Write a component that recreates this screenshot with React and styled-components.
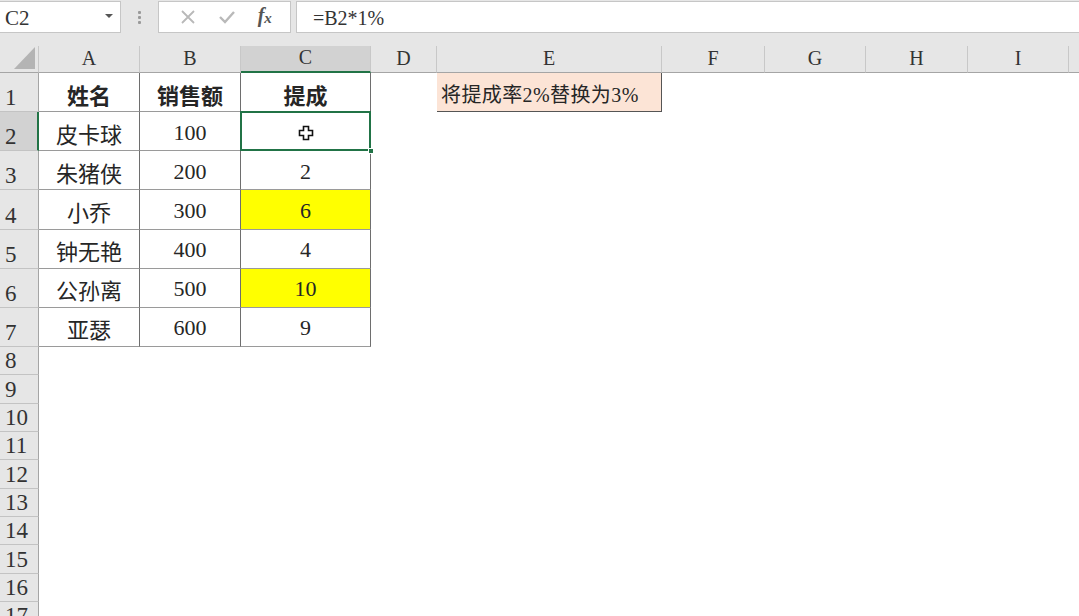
import React from "react";
import styled, { createGlobalStyle } from "styled-components";

const GlobalStyle = createGlobalStyle`
    html, body {
        margin: 0;
        padding: 0;
        background: #ffffff;
    }
    * {
        box-sizing: border-box;
    }
`;

const SERIF = `"Liberation Serif", "Noto Sans CJK SC", serif`;

const columns = ["A", "B", "C", "D", "E", "F", "G", "H", "I", ""];

const tableRows = [
    { name: "姓名", sales: "销售额", bonus: "提成", head: true },
    { name: "皮卡球", sales: "100", bonus: "", active: true },
    { name: "朱猪侠", sales: "200", bonus: "2" },
    { name: "小乔", sales: "300", bonus: "6", mark: true },
    { name: "钟无艳", sales: "400", bonus: "4" },
    { name: "公孙离", sales: "500", bonus: "10", mark: true },
    { name: "亚瑟", sales: "600", bonus: "9" },
];

const emptyRows = [8, 9, 10, 11, 12, 13, 14, 15, 16, 17];

const App = () => {
    return (
        <>
            <GlobalStyle />
            <Window>
                <FormulaBar>
                    <NameBox>
                        <span>C2</span>
                        <DropArrow />
                    </NameBox>
                    <Grip>
                        <i />
                        <i />
                        <i />
                    </Grip>
                    <ActionBox>
                        <svg width="18" height="18" viewBox="0 0 18 18">
                            <path d="M3 3 L15 15 M15 3 L3 15" stroke="#b9b9b9" strokeWidth="1.8" fill="none" />
                        </svg>
                        <svg width="20" height="18" viewBox="0 0 20 18">
                            <path d="M3 9 L8 14 L17 4" stroke="#b9b9b9" strokeWidth="2.4" fill="none" />
                        </svg>
                        <FxLabel>
                            f<sub>x</sub>
                        </FxLabel>
                    </ActionBox>
                    <FormulaInput>=B2*1%</FormulaInput>
                </FormulaBar>

                <Sheet>
                    <Corner>
                        <svg width="21" height="22" viewBox="0 0 21 22">
                            <polygon points="21,0 21,22 0,22" fill="#b4b4b4" />
                        </svg>
                    </Corner>
                    {columns.map((c, i) => (
                        <ColHeader key={"h" + i} $selected={c === "C"} $last={c === ""}>
                            {c}
                        </ColHeader>
                    ))}

                    {tableRows.map((r, i) => (
                        <React.Fragment key={"r" + i}>
                            <RowHeader $selected={r.active}>{i + 1}</RowHeader>
                            <Cell $boxed $bold={r.head}>{r.name}</Cell>
                            <Cell $boxed $bold={r.head}>{r.sales}</Cell>
                            <Cell $boxed $bold={r.head} $fill={r.mark ? "#ffff00" : null} $active={r.active}>
                                {r.active ? (
                                    <>
                                        <svg width="16" height="16" viewBox="0 0 16 16">
                                            <path
                                                d="M5.5 1.5 H10.5 V5.5 H14.5 V10.5 H10.5 V14.5 H5.5 V10.5 H1.5 V5.5 H5.5 Z"
                                                fill="#ffffff"
                                                stroke="#111111"
                                                strokeWidth="1.6"
                                            />
                                        </svg>
                                        <FillHandle />
                                    </>
                                ) : (
                                    r.bonus
                                )}
                            </Cell>
                            <Cell />
                            {i === 0 ? <NoteCell>将提成率2%替换为3%</NoteCell> : <Cell />}
                            <Cell />
                            <Cell />
                            <Cell />
                            <Cell />
                            <Cell />
                        </React.Fragment>
                    ))}

                    {emptyRows.map((n) => (
                        <React.Fragment key={"e" + n}>
                            <RowHeader>{n}</RowHeader>
                            {columns.map((c, i) => (
                                <Cell key={"c" + n + i} />
                            ))}
                        </React.Fragment>
                    ))}
                </Sheet>
            </Window>
        </>
    );
};

export default App;

const Window = styled.div`
    width: 1079px;
    height: 616px;
    overflow: hidden;
    display: flex;
    flex-direction: column;
    background: #e6e6e6;
    font-family: ${SERIF};
    color: #262626;
`;

const FormulaBar = styled.div`
    height: 46px;
    flex-shrink: 0;
    display: flex;
    align-items: flex-start;
    padding-top: 1px;
`;

const NameBox = styled.div`
    width: 121px;
    height: 32px;
    background: #ffffff;
    border: 1px solid #c6c6c6;
    border-left: none;
    display: flex;
    align-items: center;
    justify-content: space-between;
    padding: 2px 7px 0 5px;
    font-size: 21px;
    color: #333333;
`;

const DropArrow = styled.span`
    width: 0;
    height: 0;
    border-left: 4px solid transparent;
    border-right: 4px solid transparent;
    border-top: 4px solid #555555;
    margin-top: -4px;
`;

const Grip = styled.div`
    width: 37px;
    height: 32px;
    display: flex;
    flex-direction: column;
    align-items: center;
    justify-content: center;
    gap: 2px;

    i {
        width: 3px;
        height: 3px;
        background: #9a9a9a;
        border-radius: 1px;
    }
`;

const ActionBox = styled.div`
    width: 133px;
    height: 32px;
    background: #ffffff;
    border: 1px solid #c6c6c6;
    display: flex;
    align-items: center;
    justify-content: space-around;
    padding: 0 8px 0 10px;
`;

const FxLabel = styled.span`
    font-family: ${SERIF};
    font-style: italic;
    font-weight: bold;
    font-size: 20px;
    color: #555555;
    margin-top: -4px;

    sub {
        font-size: 15px;
        vertical-align: -1px;
    }
`;

const FormulaInput = styled.div`
    flex: 1;
    height: 32px;
    margin-left: 5px;
    background: #ffffff;
    border: 1px solid #c6c6c6;
    border-right: none;
    display: flex;
    align-items: center;
    padding: 2px 0 0 16px;
    font-size: 20px;
    color: #333333;
`;

const Sheet = styled.div`
    flex: 1;
    display: grid;
    grid-template-columns: 39px 101px 101px 130px 66px 225px 103px 101px 102px 101px 1fr;
    grid-template-rows: 27px repeat(7, 39.15px) repeat(10, 28.35px);
    background: #ffffff;
`;

const Corner = styled.div`
    background: #e6e6e6;
    border-right: 1px solid #c8c8c8;
    border-bottom: 1px solid #a5a5a5;
    display: flex;
    align-items: flex-end;
    justify-content: flex-end;
    padding: 0 3px 3px 0;
`;

const ColHeader = styled.div`
    background: ${(p) => (p.$selected ? "#d2d2d2" : "#e6e6e6")};
    border-right: ${(p) => (p.$last ? "none" : "1px solid #c8c8c8")};
    border-bottom: ${(p) => (p.$selected ? "2px solid #217346" : "1px solid #a5a5a5")};
    display: flex;
    align-items: flex-end;
    justify-content: center;
    padding-bottom: 2px;
    font-size: 20px;
    color: #333333;
`;

const RowHeader = styled.div`
    background: ${(p) => (p.$selected ? "#d2d2d2" : "#e6e6e6")};
    border-right: ${(p) => (p.$selected ? "2px solid #217346" : "1px solid #a5a5a5")};
    border-bottom: 1px solid #c3c3c3;
    display: flex;
    align-items: flex-end;
    padding: 0 0 2px 5px;
    font-size: 23px;
    line-height: 1;
    color: #333333;
`;

const Cell = styled.div`
    position: relative;
    background: ${(p) => p.$fill || "#ffffff"};
    border-right: ${(p) => (p.$boxed ? "1px solid #6e6e6e" : "none")};
    border-bottom: ${(p) => (p.$boxed ? "1px solid #9a9a9a" : "none")};
    display: flex;
    align-items: center;
    justify-content: center;
    padding-top: 3px;
    font-size: 22px;
    font-weight: ${(p) => (p.$bold ? "bold" : "normal")};
    white-space: nowrap;
    overflow: ${(p) => (p.$active ? "visible" : "hidden")};

    &::after {
        content: "";
        display: ${(p) => (p.$active ? "block" : "none")};
        position: absolute;
        top: -1px;
        left: -1px;
        right: -1px;
        bottom: -1px;
        border: 2px solid #217346;
        pointer-events: none;
    }
`;

const FillHandle = styled.span`
    position: absolute;
    right: -4px;
    bottom: -4px;
    width: 6px;
    height: 6px;
    background: #217346;
    border: 1px solid #ffffff;
    z-index: 2;
`;

const NoteCell = styled.div`
    background: #fce4d6;
    border-left: 1px solid #555555;
    border-right: 1px solid #555555;
    border-bottom: 1px solid #555555;
    margin-left: -1px;
    display: flex;
    align-items: center;
    padding: 3px 0 0 4px;
    font-size: 20px;
    letter-spacing: 0.4px;
    white-space: nowrap;
    overflow: hidden;
`;
